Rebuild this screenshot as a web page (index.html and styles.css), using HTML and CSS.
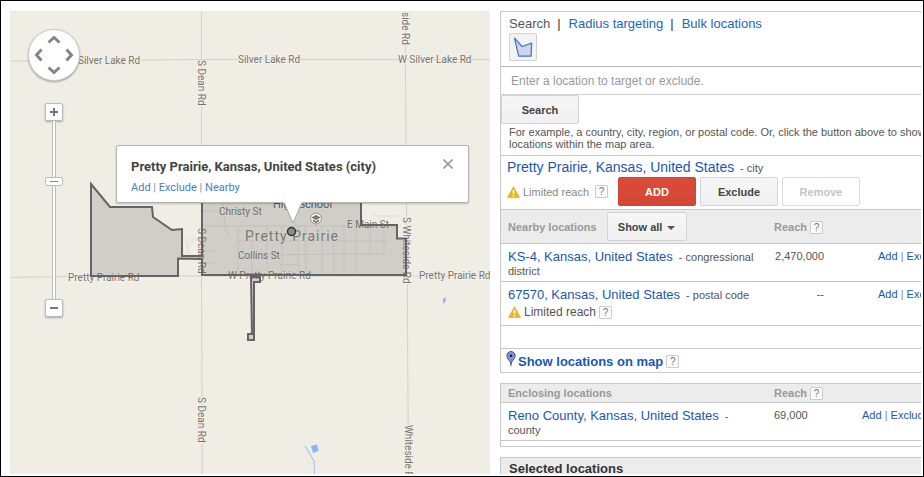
FILE: index.html
```html
<!DOCTYPE html>
<html lang="en">
<head>
<meta charset="utf-8">
<title>Location targeting</title>
<link rel="stylesheet" href="styles.css">
</head>
<body>
<main class="frame">
  <section class="map" aria-label="Map">
    <svg class="map-art" viewBox="10 11 480 463" preserveAspectRatio="xMidYMid slice">
      <g class="roads">
        <path d="M10 61H80M141 60L202 59.500H490M10 277.500L91 276H490M201.500 11V277L202.300 474M405 11L406.500 200L407.500 320L408.500 474"/>
      </g>
      <g class="streets">
        <path d="M203 226H397M203 211H218M223 202L225 228L229 236M238 228V275M203 251H214M203 263H214M252 232V275M267 225V275M282 225V275M298 225V275M305 225L306 275M322 225V275M334 228V275M344 225V275M356 225V275M370 225V254M384 225V254M238 241H388M252 255L360 254H384M186 237L189 254M190 240H200M372 213L376 216H398M280 265H300"/>
      </g>
      <g class="water">
        <path class="stream" d="M305 446L314 461L314.500 474"/>
        <path d="M311 446L317 444.500L318.500 451L313 453ZM443 299L446 297L445.500 301L443 304Z"/>
      </g>
      <g class="labels">
        <text x="78" y="64">Silver Lake Rd</text>
        <text x="238" y="63">Silver Lake Rd</text>
        <text x="398" y="63">W Silver Lake Rd</text>
        <text x="68" y="281">Pretty Prairie Rd</text>
        <text x="228" y="279">W Pretty Prairie Rd</text>
        <text x="419" y="279">Pretty Prairie Rd</text>
        <text x="219" y="215">Christy St</text>
        <text x="238" y="259">Collins St</text>
        <text x="347" y="228">E Main St</text>
        <text transform="translate(198 60) rotate(90)">S Dean Rd</text>
        <text transform="translate(198 228) rotate(90)">S Dean Rd</text>
        <text transform="translate(198 397) rotate(90)">S Dean Rd</text>
        <text transform="translate(402 12) rotate(90)">side Rd</text>
        <text transform="translate(403 217) rotate(90)">S Whiteside Rd</text>
        <text transform="translate(405 425) rotate(90)">Whiteside Rd</text>
        <text class="place" x="273" y="208">High School</text>
        <text class="town" x="245" y="241">Pretty Prairie</text>
      </g>
      <g class="area">
        <path d="M91 184L110 207H152L153 217L172 230L182 229V256H202V190H361V225H397V238.500H406V275H202V259L178 258.500V276H91Z"/>
        <path d="M251 277L252 334H248V340H254V282H260V277Z"/>
      </g>
      <circle class="school-dot" cx="316" cy="218.500" r="5.500"/>
      <path class="school-cap" d="M311.500 217.500L316 215L320.500 217.500L316 220ZM313 219.500L316 221.200L319 219.500V221.500L316 223L313 221.500Z"/>
      <circle class="marker" cx="291.500" cy="231.500" r="4"/>
    </svg>

    <div class="pan">
      <button class="pan-up" aria-label="Pan up"><svg viewBox="0 0 14 9"><path d="M1.500 7.500L7 2.500L12.500 7.500"/></svg></button>
      <button class="pan-left" aria-label="Pan left"><svg viewBox="0 0 9 14"><path d="M7.500 1.500L2.500 7L7.500 12.500"/></svg></button>
      <button class="pan-right" aria-label="Pan right"><svg viewBox="0 0 9 14"><path d="M1.500 1.500L6.500 7L1.500 12.500"/></svg></button>
      <button class="pan-down" aria-label="Pan down"><svg viewBox="0 0 14 9"><path d="M1.500 1.500L7 6.500L12.500 1.500"/></svg></button>
    </div>
    <div class="zoomer">
      <button aria-label="Zoom in"><svg viewBox="0 0 8 8"><path d="M0 4H8M4 0V8"/></svg></button>
      <input type="range" min="0" max="21" value="14" aria-label="Zoom level">
      <button aria-label="Zoom out"><svg viewBox="0 0 8 8"><path d="M0 4H8"/></svg></button>
    </div>

    <div class="popup">
      <div class="popup-head">
        <h2>Pretty Prairie, Kansas, United States (city)</h2>
        <button aria-label="Close"><svg viewBox="0 0 10 10"><path d="M0.500 0.500L9.500 9.500M9.500 0.500L0.500 9.500"/></svg></button>
      </div>
      <p><a href="#">Add</a> | <a href="#">Exclude</a> | <a href="#">Nearby</a></p>
      <svg class="tail" viewBox="0 0 20 23"><path class="tail-fill" d="M0 0V1.500H1L10 22L19 1.500H20V0Z"/><path class="tail-edge" d="M1 1.500L10 22L19 1.500"/></svg>
    </div>
  </section>

  <div class="side">
    <section class="panel">
      <div class="modes">
        <nav><span>Search</span><i>|</i><a href="#">Radius targeting</a><i>|</i><a href="#">Bulk locations</a></nav>
        <button class="shape" aria-label="Draw area"><svg viewBox="0 0 20 21"><path d="M1 1L9 10L19 6.500L18.500 20H5.500Z"/></svg></button>
      </div>
      <form class="search">
        <input type="text" placeholder="Enter a location to target or exclude." aria-label="Location">
        <button type="button" class="btn">Search</button>
        <p>For example, a country, city, region, or postal code. Or, click the button above to show<br>locations within the map area.</p>
      </form>
      <div class="result">
        <div class="result-name"><a href="#">Pretty Prairie, Kansas, United States</a> <small>- city</small></div>
        <div class="result-tools">
          <span class="limited">
            <svg class="warn" viewBox="0 0 13 12"><path d="M6.500 0.500L12.700 11.700H0.300Z"/><path class="bang" d="M6.500 4V8M6.500 9V10.500"/></svg>
            Limited reach <button class="help" aria-label="Help">?</button>
          </span>
          <button class="btn primary">ADD</button>
          <button class="btn">Exclude</button>
          <button class="btn" disabled>Remove</button>
        </div>
      </div>
      <table class="nearby">
        <thead>
          <tr>
            <th class="name"><span class="name-tools">Nearby locations <button class="btn filter">Show all <svg viewBox="0 0 8 4"><path d="M0 0H8L4 4Z"/></svg></button></span></th>
            <th class="reach">Reach <button class="help" aria-label="Help">?</button></th>
            <th class="act"></th>
          </tr>
        </thead>
        <tbody>
          <tr>
            <td><a class="loc" href="#">KS-4, Kansas, United States</a> - congressional district</td>
            <td class="num"><span>2,470,000</span></td>
            <td class="act"><a href="#">Add</a> | <a href="#">Exclude</a> | <a href="#">Nearby</a></td>
          </tr>
          <tr>
            <td><a class="loc" href="#">67570, Kansas, United States</a> - postal code
              <div class="limited dark">
                <svg class="warn" viewBox="0 0 13 12"><path d="M6.500 0.500L12.700 11.700H0.300Z"/><path class="bang" d="M6.500 4V8M6.500 9V10.500"/></svg>
                Limited reach <button class="help" aria-label="Help">?</button>
              </div>
            </td>
            <td class="num"><span>--</span></td>
            <td class="act"><a href="#">Add</a> | <a href="#">Exclude</a> | <a href="#">Nearby</a></td>
          </tr>
        </tbody>
      </table>
      <div class="blank"></div>
      <div class="show-map">
        <svg class="pin" viewBox="0 0 10 15"><path class="pin-leg" d="M5 8V15"/><path class="pin-body" d="M5 13C4.500 10 0.800 8 0.800 4.700A4.200 4.200 0 0 1 9.200 4.700C9.200 8 5.500 10 5 13Z"/><circle cx="5" cy="4.700" r="1.300"/></svg>
        <a href="#">Show locations on map</a>
        <button class="help" aria-label="Help">?</button>
      </div>
    </section>

    <section class="panel">
      <table class="enclosing">
        <thead>
          <tr>
            <th class="name">Enclosing locations</th>
            <th class="reach">Reach <button class="help" aria-label="Help">?</button></th>
            <th class="act"></th>
          </tr>
        </thead>
        <tbody>
          <tr>
            <td><a class="loc" href="#">Reno County, Kansas, United States</a> - county</td>
            <td class="num">69,000</td>
            <td class="act"><a href="#">Add</a> | <a href="#">Exclude</a> | <a href="#">Nearby</a></td>
          </tr>
        </tbody>
      </table>
      <div class="foot"></div>
    </section>

    <section class="panel">
      <h2 class="selected">Selected locations</h2>
    </section>
  </div>
</main>
</body>
</html>
```

FILE: styles.css
```css
* { box-sizing: border-box; }

body {
  margin: 0;
  font: 11px/14px "Liberation Sans", Arial, sans-serif;
  color: #555;
  background: #fff;
}

h2, p { margin: 0; }
a { color: #1a56b8; text-decoration: none; }
button { font-family: inherit; cursor: pointer; }
svg { display: block; }

.frame {
  display: grid;
  grid-template-columns: 480fr 421fr;
  gap: 10px;
  height: 100vh;
  padding: 10px 2px 2px 9px;
  border: 1px solid #000;
  overflow: hidden;
}

/* Map */
.map {
  position: relative;
  overflow: hidden;
  background: #efede4;
  font-family: Roboto, sans-serif;
}
.map-art { width: 100%; height: 100%; }
.roads path { fill: none; stroke: #d3d1c9; stroke-width: 1; }
.streets path { fill: none; stroke: #dddbd1; stroke-width: 1; }
.water path { fill: #8ab4f8; }
.water .stream { fill: none; stroke: #9fbdea; }
.labels text {
  font-size: 10px;
  fill: #77746a;
  stroke: #f3f1ea;
  stroke-width: 2px;
  paint-order: stroke;
}
.labels .place { font-size: 11px; fill: #555; }
.labels .town { font-size: 14px; letter-spacing: 1px; fill: #858278; }
.area path {
  fill: #555;
  fill-opacity: 0.2;
  stroke: #646464;
  stroke-width: 2;
}
.school-dot { fill: #efede8; stroke: #97948c; }
.school-cap { fill: #77746c; }
.marker { fill: #8c8c8c; stroke: #333; stroke-width: 1.5; }

.pan {
  position: absolute;
  left: 18px;
  top: 18px;
  width: 52px;
  height: 52px;
  padding: 5px;
  display: grid;
  grid-template: "up up" 9px "left right" 1fr "down down" 9px / 1fr 1fr;
  align-items: center;
  justify-items: center;
  border: 1px solid #ccc;
  border-radius: 50%;
  background: #fff;
  box-shadow: 0 1px 2px rgba(0, 0, 0, 0.35);
}
.pan button { padding: 0; border: 0; background: none; }
.pan path { fill: none; stroke: #858585; stroke-width: 3; }
.pan-up { grid-area: up; }
.pan-left { grid-area: left; justify-self: start; }
.pan-right { grid-area: right; justify-self: end; }
.pan-down { grid-area: down; }
.pan-up svg, .pan-down svg { width: 14px; height: 9px; }
.pan-left svg, .pan-right svg { width: 9px; height: 14px; }

.zoomer {
  position: absolute;
  left: 35px;
  top: 92px;
  width: 18px;
  display: flex;
  flex-direction: column;
  align-items: center;
}
.zoomer button {
  width: 18px;
  height: 18px;
  padding: 4px;
  border: 1px solid #bbb;
  border-radius: 2px;
  background: #fff;
  box-shadow: 0 1px 2px rgba(0, 0, 0, 0.3);
}
.zoomer path { stroke: #777; stroke-width: 2; }
.zoomer input {
  appearance: none;
  writing-mode: vertical-lr;
  direction: rtl;
  width: 18px;
  height: 178px;
  margin: 0;
  background: none;
}
.zoomer input::-webkit-slider-runnable-track {
  width: 4px;
  height: 178px;
  background: #fff;
  border: solid #bbb;
  border-width: 0 1px;
}
.zoomer input::-webkit-slider-thumb {
  appearance: none;
  width: 18px;
  height: 9px;
  margin-left: -8px;
  border: 1px solid #bbb;
  border-radius: 2px;
  background: linear-gradient(#888, #888) center / 8px 1px no-repeat #fff;
}

.popup {
  position: absolute;
  left: 106px;
  top: 134px;
  width: 353px;
  height: 58px;
  padding: 13px 15px 8px 14px;
  border: 1px solid #b5b3ad;
  border-radius: 2px;
  background: #fff;
  box-shadow: 0 1px 2px rgba(0, 0, 0, 0.2);
  line-height: 15px;
  color: #888;
}
.popup-head { display: flex; justify-content: space-between; align-items: flex-start; }
.popup h2 { font-size: 13px; line-height: 15px; color: #444; }
.popup-head button { width: 10px; padding: 0; border: 0; background: none; }
.popup-head path { stroke: #999; stroke-width: 1.6; }
.popup p { margin-top: 6px; }
.popup a { color: #4a7cc9; }
.tail { position: absolute; left: 166px; top: 55px; width: 20px; height: 23px; }
.tail-fill { fill: #fff; }
.tail-edge { fill: none; stroke: #aaa8a2; stroke-width: 1; }

/* Side column */
.side { min-width: 0; overflow: hidden; display: flex; flex-direction: column; gap: 10px; }
.panel {
  flex: none;
  border: solid #c8c8c8;
  border-width: 1px 0 1px 1px;
  overflow: hidden;
}

.modes { padding: 3px 8px 5px; }
nav { margin-bottom: 1px; font-size: 13px; line-height: 17px; white-space: nowrap; }
nav i { margin: 0 8px 0 7px; font-style: normal; color: #333; }
nav a { color: #1668c4; }
.shape {
  display: block;
  width: 28px;
  height: 28px;
  padding: 3px;
  border: 1px solid #d2d2d2;
  border-radius: 2px;
  background: #f3f3f3;
}
.shape svg { width: 20px; height: 20px; }
.shape path { fill: #c9d7f0; stroke: #4a74b8; stroke-width: 1.3; }

.search input {
  display: block;
  width: 100%;
  height: 29px;
  padding: 0 10px;
  border: solid #d0d0d0;
  border-width: 1px 0;
  border-top-color: #b8b8b8;
  font: 12px "Liberation Sans", Arial, sans-serif;
}
.search input::placeholder { color: #999; }
.search p { padding: 2px 8px 5px; line-height: 12px; white-space: nowrap; }

.btn {
  width: 78px;
  height: 29px;
  padding: 0;
  border: 1px solid #d4d4d4;
  border-radius: 2px;
  background: linear-gradient(#f6f6f6, #f0f0f0);
  font-size: 11px;
  font-weight: bold;
  color: #444;
}
.search .btn { display: block; }
.btn.primary { border-color: #cf4534; background: linear-gradient(#dc4b39, #d24636); color: #fff; }
.btn:disabled { background: #fff; border-color: #dcdcdc; color: #c4c4c4; }

.result { padding: 1px 6px 3px; border-top: 1px solid #c8c8c8; }
.result-name { height: 20px; font-size: 14px; line-height: 20px; white-space: nowrap; }
.result-name small { margin-left: 2px; font-size: 11px; }
.result-tools { display: flex; gap: 4px; }
.limited { display: flex; align-items: center; gap: 3px; color: #888; }
.result-tools .limited { width: 107px; flex: none; }
.limited.dark { height: 20px; font-size: 12px; color: #555; }
.warn { flex: none; width: 13px; height: 12px; }
.warn path { fill: #efb31f; stroke: #efb31f; stroke-linejoin: round; stroke-width: 0.600; }
.warn .bang { stroke: #fff; stroke-width: 1.600; }

.help {
  width: 13px;
  height: 13px;
  padding: 0;
  border: 1px solid #ccc;
  border-radius: 1px;
  background: #fafafa;
  font-size: 10px;
  line-height: 11px;
  color: #777;
}
.limited .help { margin-left: 3px; }
.limited.dark .help { margin-left: 0; }

table { width: 100%; table-layout: fixed; border-collapse: separate; border-spacing: 0; }
th, td { padding: 0; border-top: 1px solid #c8c8c8; text-align: left; vertical-align: top; }
th { height: 34px; background: #ececec; color: #999; vertical-align: middle; }
td { padding: 6px 0 3px 7px; }
th.name { width: 273px; padding-left: 7px; }
.name-tools { display: flex; align-items: center; gap: 10px; }
.enclosing th { height: 18px; border-top: 0; }
td:first-child { padding-right: 16px; }
.reach { width: 104px; white-space: nowrap; }
.enclosing .reach { width: 88px; }
td.num { padding: 5px 0 0; }
td.num span { display: block; width: 50px; text-align: right; }
td.act { padding: 5px 0 0; white-space: nowrap; color: #888; }
.loc { margin-right: 3px; font-size: 13px; }
.filter { width: 80px; }
.filter svg { display: inline-block; width: 8px; height: 4px; margin-left: 2px; vertical-align: middle; fill: #555; }

.blank { height: 23px; border-top: 1px solid #c8c8c8; }
.show-map {
  display: flex;
  align-items: center;
  gap: 2px;
  height: 24px;
  padding: 2px 5px 0;
  border-top: 1px solid #c8c8c8;
  font-size: 13px;
  font-weight: bold;
}
.show-map .help { margin-left: 1px; }
.pin { width: 10px; height: 15px; margin-bottom: 6px; }
.pin-body { fill: #7d93e8; stroke: #444; stroke-width: 0.800; }
.pin-leg { stroke: #444; }
.pin circle { fill: #222; }
.foot { height: 6px; border-top: 1px solid #c8c8c8; }
.selected { padding: 2px 8px; background: #ececec; font-size: 13px; line-height: 17px; color: #333; }
```
